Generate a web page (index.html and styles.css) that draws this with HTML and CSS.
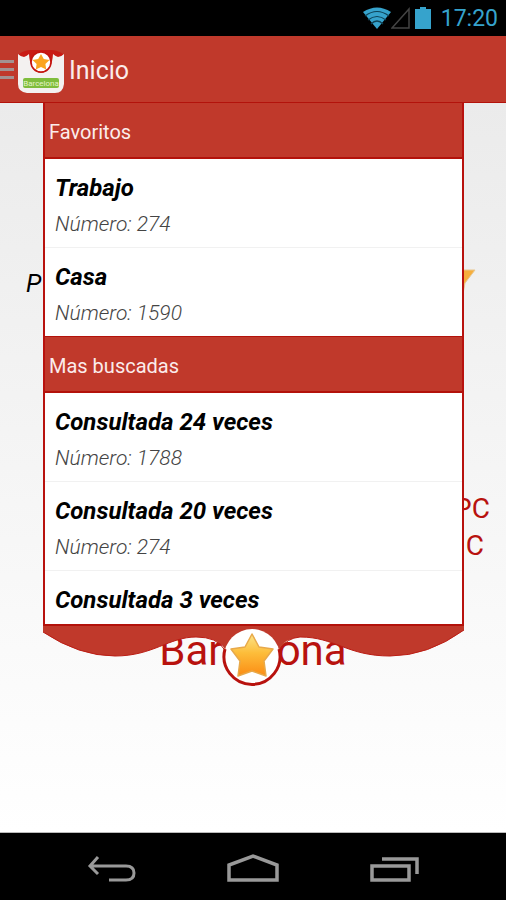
FILE: index.html
```html
<!DOCTYPE html>
<html lang="es">
<head>
  <meta charset="UTF-8" />
  <meta name="viewport" content="width=device-width, initial-scale=1" />
  <title>Inicio</title>
  <link rel="stylesheet" href="styles.css">
</head>
<body>
  <div class="status-bar">
    <svg width="28" height="22" viewBox="0 0 28 22">
      <path d="M0 5Q14-4 28 5L14 22Z" fill="#36a3cc"/>
      <path d="M2 9Q14 0 26 9M5 13Q14 6 23 13M8 17Q14 11 20 17" fill="none" stroke="#0d4256" stroke-width="1.2"/>
    </svg>
    <svg width="20" height="22" viewBox="0 0 20 22">
      <path d="M1 21L18 2V21Z" fill="none" stroke="#444" stroke-width="1.5"/>
    </svg>
    <svg class="battery" width="16" height="22" viewBox="0 0 16 22">
      <path d="M5 0h6v2h5v20H0V2h5z" fill="#36a3cc"/>
    </svg>
    <span class="clock">17:20</span>
  </div>

  <header class="action-bar">
    <button type="button" class="menu-btn" aria-label="Menu"></button>
    <svg class="app-icon" width="48" height="48" viewBox="0 0 48 48">
      <path d="M2 8Q8 4 14 4H34Q40 4 46 8V22H2Z" fill="#c81a14"/>
      <path d="M1 8Q4 11 7 11Q10 10 12 8Q13 26 24 27Q35 26 36 8Q38 10 41 11Q44 11 47 8V38Q46 47 38 47H10Q1 46 1 38Z" fill="#f3f1f0"/>
      <circle cx="24" cy="16" r="10" fill="#fff" stroke="#c4150f" stroke-width="1.6"/>
      <path d="M24 8l2.800 5 5.700.9-4.100 4.100.8 5.600L24 21l-5.200 2.600.8-5.600-4.100-4.100 5.700-.9z" fill="#fba41f"/>
      <rect x="6" y="32" width="36" height="10" rx="2" fill="#7fbd3c"/>
      <text x="24" y="40" text-anchor="middle" class="app-icon-text">Barcelona</text>
    </svg>
    <h1>Inicio</h1>
  </header>

  <main class="home">
    <div class="search-row">
      <span>P</span>
      <svg width="42" height="40" viewBox="0 0 42 40">
        <path d="M20-2l6 9 15 0-10 13-3 16-9-8-13 7 3-15L1 9l14-2z" fill="#f6ae3c" stroke="#e8c78e"/>
      </svg>
    </div>
    <div class="credits">
      <p>PC</p>
      <p class="credits-short">C</p>
    </div>
    <p class="city">Barcelona</p>

    <section class="drawer">
      <div class="drawer-list">
        <h2>Favoritos</h2>
        <ul>
          <li><strong>Trabajo</strong><span>Número: 274</span></li>
          <li><strong>Casa</strong><span>Número: 1590</span></li>
        </ul>
        <h2>Mas buscadas</h2>
        <ul>
          <li><strong>Consultada 24 veces</strong><span>Número: 1788</span></li>
          <li><strong>Consultada 20 veces</strong><span>Número: 274</span></li>
          <li><strong>Consultada 3 veces</strong></li>
        </ul>
      </div>
      <button type="button" class="drawer-handle" aria-label="Cerrar">
        <svg viewBox="0 0 421 62">
          <defs>
            <linearGradient id="gold" x1="0" y1="0" x2="0" y2="1">
              <stop offset="0" stop-color="#fbe58a"/>
              <stop offset="0.45" stop-color="#fdbd3a"/>
              <stop offset="1" stop-color="#fb8c14"/>
            </linearGradient>
          </defs>
          <path d="M0 0H421V6Q385 32 347 32C304 32 292 13 257 13Q243 14 236 25H182Q174 13 153 13C126 13 110 32 72 32Q36 32 0 8Z" fill="#c0392b"/>
          <path d="M0 8Q36 32 72 32C110 32 126 13 153 13Q174 13 181 25M421 6Q385 32 347 32C304 32 292 13 257 13Q244 14 237 25" fill="none" stroke="#bb1d14" stroke-width="1"/>
          <path d="M0 1H421" stroke="#b3120b" stroke-width="2"/>
          <circle cx="209" cy="33" r="28" fill="#fff"/>
          <path d="M182 25A28 28 0 1 0 236 25" fill="none" stroke="#b8120e" stroke-width="3"/>
          <path d="M209 10l7 13 14 2-9 12 2 15-14-5-14 5 2-15-9-12 14-2z" fill="url(#gold)" stroke="#e8a94a" stroke-width="1.5" stroke-linejoin="round"/>
        </svg>
      </button>
    </section>
  </main>

  <nav class="nav-bar">
    <button type="button" aria-label="Back">
      <svg width="50" height="30" viewBox="0 0 50 30">
        <path d="M12 3L4 12l8 8M4 12H40Q48 12 48 19T40 26H23" fill="none" stroke="#999" stroke-width="3"/>
      </svg>
    </button>
    <button type="button" aria-label="Home">
      <svg width="52" height="30" viewBox="0 0 52 30">
        <path d="M2 26V11L26 2l24 9V26Z" fill="none" stroke="#999" stroke-width="3.500"/>
      </svg>
    </button>
    <button type="button" aria-label="Recent">
      <svg width="50" height="30" viewBox="0 0 50 30">
        <path d="M2 12H39V26H2ZM12 5H47V20" fill="none" stroke="#999" stroke-width="3.500"/>
      </svg>
    </button>
  </nav>
</body>
</html>
```
FILE: styles.css
```css
* {
  box-sizing: border-box;
}
body {
  margin: 0;
  min-height: 100vh;
  display: flex;
  flex-direction: column;
  font-family: Roboto, "Noto Sans", sans-serif;
  background: #000;
}
h1, h2, p, ul {
  margin: 0;
  padding: 0;
  font-weight: 400;
}
button {
  padding: 0;
  border: none;
  background: none;
  cursor: pointer;
}
svg {
  display: block;
}

.status-bar {
  height: 36px;
  padding: 0 8px;
  display: flex;
  align-items: center;
  justify-content: flex-end;
}
.battery {
  margin: 0 10px 0 4px;
}
.clock {
  color: #36a3cc;
  font-size: 23px;
}

.action-bar {
  height: 66px;
  padding-top: 2px;
  display: flex;
  align-items: center;
  background: #c0392b;
  color: #fbeceb;
}
.menu-btn {
  width: 14px;
  height: 20px;
  margin-right: 3px;
  background: repeating-linear-gradient(#a39291 0 3px, transparent 3px 8px);
}
.app-icon-text {
  font-size: 8px;
  fill: #e4f4c8;
}
.action-bar h1 {
  margin-left: 4px;
  font-size: 25px;
}

.home {
  position: relative;
  flex: 1;
  padding: 160px 16px 0 26px;
  background: linear-gradient(#ebebeb, #fff);
  border-top: 1px solid #b3120b;
  border-bottom: 1px solid #bbb;
}
.search-row {
  height: 40px;
  padding-right: 14px;
  display: flex;
  align-items: center;
  justify-content: space-between;
  font-size: 25px;
  font-style: italic;
}
.search-row svg {
  align-self: flex-end;
  overflow: visible;
}
.credits {
  margin-top: 187px;
  color: #b8120e;
  font-size: 28px;
  line-height: 37px;
  text-align: right;
}
.credits-short {
  padding-right: 6px;
}
.city {
  margin-top: 61px;
  padding-right: 10px;
  color: #b8120e;
  font-size: 42px;
  line-height: 52px;
  text-align: center;
}

/* pull-down list over the home screen */
.drawer {
  position: absolute;
  top: 0;
  left: 43px;
  right: 42px;
  bottom: 20%;
  display: flex;
  flex-direction: column;
}
.drawer-list {
  flex: 1;
  min-height: 0;
  overflow: hidden;
  background: #fff;
  border: solid #b8120e;
  border-width: 0 2px;
}
.drawer h2 {
  height: 56px;
  padding: 2px 4px 0;
  font-size: 20px;
  line-height: 54px;
  color: #fbeceb;
  background: #c0392b;
  border-bottom: 2px solid #b3120b;
}
.drawer ul {
  list-style: none;
}
.drawer li {
  height: 89px;
  padding: 12px 10px;
  font-style: italic;
  border-bottom: 1px solid #f1f1f1;
}
.drawer li:last-child {
  border-bottom-color: #b3120b;
}
.drawer li strong,
.drawer li span {
  display: block;
}
.drawer li strong {
  font-size: 24px;
  line-height: 34px;
}
.drawer li span {
  font-size: 21px;
  font-weight: 300;
  line-height: 39px;
  color: #444;
}
.drawer-handle svg {
  width: 100%;
  overflow: visible;
}

.nav-bar {
  height: 67px;
  padding: 4px 40px 0;
  display: flex;
  align-items: center;
  justify-content: space-around;
}
```
